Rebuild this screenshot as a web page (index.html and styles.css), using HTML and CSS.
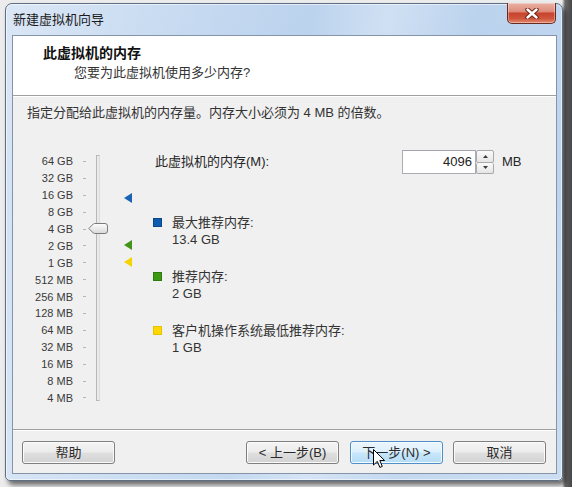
FILE: index.html
```html
<!DOCTYPE html>
<html lang="zh-CN">
<head>
<meta charset="utf-8">
<title>新建虚拟机向导</title>
<link rel="stylesheet" href="styles.css">
</head>
<body>
<div class="screen">
  <div class="window">
    <div class="titlebar">
      <span class="title">新建虚拟机向导</span>
      <button class="close" aria-label="关闭">
        <svg width="14" height="11" viewBox="0 0 14 11">
          <path d="M2.5 1.5 L11.5 9.5 M11.5 1.5 L2.5 9.5" stroke="#6b2417" stroke-width="4.4" stroke-linecap="round"/>
          <path d="M2.5 1.5 L11.5 9.5 M11.5 1.5 L2.5 9.5" stroke="#ffffff" stroke-width="2.4" stroke-linecap="round"/>
        </svg>
      </button>
    </div>

    <div class="client">
      <div class="head">
        <div class="head-title">此虚拟机的内存</div>
        <div class="head-sub">您要为此虚拟机使用多少内存?</div>
      </div>

      <div class="page">
        <p class="hint">指定分配给此虚拟机的内存量。内存大小必须为 4 MB 的倍数。</p>

        <div class="memory">
          <div class="scale">
            <div class="marks">
              <div class="mark"><span>64 GB</span></div>
              <div class="mark"><span>32 GB</span></div>
              <div class="mark"><span>16 GB</span></div>
              <div class="mark"><span>8 GB</span></div>
              <div class="mark"><span>4 GB</span></div>
              <div class="mark"><span>2 GB</span></div>
              <div class="mark"><span>1 GB</span></div>
              <div class="mark"><span>512 MB</span></div>
              <div class="mark"><span>256 MB</span></div>
              <div class="mark"><span>128 MB</span></div>
              <div class="mark"><span>64 MB</span></div>
              <div class="mark"><span>32 MB</span></div>
              <div class="mark"><span>16 MB</span></div>
              <div class="mark"><span>8 MB</span></div>
              <div class="mark"><span>4 MB</span></div>
            </div>

            <div class="slider">
              <div class="track"></div>
              <svg class="thumb" style="top:70px" width="20" height="11" viewBox="0 0 20 11">
                <defs>
                  <linearGradient id="thumbFill" x1="0" y1="0" x2="0" y2="1">
                    <stop offset="0" stop-color="#fdfdfd"/>
                    <stop offset="1" stop-color="#d9d9d9"/>
                  </linearGradient>
                </defs>
                <path d="M0.8 5.5 L5.3 1 Q5.8 0.5 6.6 0.5 H17 Q19.5 0.5 19.5 3 V8 Q19.5 10.5 17 10.5 H6.6 Q5.8 10.5 5.3 10 Z" fill="url(#thumbFill)" stroke="#7b7b7b"/>
              </svg>
            </div>

            <div class="markers">
              <svg class="pin" style="top:40px" width="8" height="10" viewBox="0 0 8 10"><polygon points="8,0 8,10 0,5" fill="#1b63b4"/></svg>
              <svg class="pin" style="top:87px" width="8" height="10" viewBox="0 0 8 10"><polygon points="8,0 8,10 0,5" fill="#45941a"/></svg>
              <svg class="pin" style="top:104px" width="8" height="10" viewBox="0 0 8 10"><polygon points="8,0 8,10 0,5" fill="#f4d300"/></svg>
            </div>
          </div>

          <div class="settings">
            <div class="amount">
              <label class="amount-label">此虚拟机的内存(M):</label>
              <div class="spin">
                <div class="spin-field">4096</div>
                <div class="spin-btns">
                  <span class="spin-btn"><svg width="5" height="3" viewBox="0 0 5 3"><polygon points="0,3 5,3 2.5,0" fill="#3a3a3a"/></svg></span>
                  <span class="spin-btn"><svg width="5" height="3" viewBox="0 0 5 3"><polygon points="0,0 5,0 2.5,3" fill="#3a3a3a"/></svg></span>
                </div>
              </div>
              <span class="unit">MB</span>
            </div>

            <ul class="legend">
              <li><i class="sw sw-max"></i><div>最大推荐内存:<br>13.4 GB</div></li>
              <li><i class="sw sw-rec"></i><div>推荐内存:<br>2 GB</div></li>
              <li><i class="sw sw-min"></i><div>客户机操作系统最低推荐内存:<br>1 GB</div></li>
            </ul>
          </div>
        </div>
      </div>

      <div class="foot">
        <button class="btn">帮助</button>
        <div class="nav">
          <button class="btn">&lt; 上一步(B)</button>
          <button class="btn btn-hot">下一步(N) &gt;</button>
          <button class="btn">取消</button>
        </div>
      </div>
    </div>
  </div>

  <svg class="cursor" width="13" height="20" viewBox="0 0 13 20">
    <path d="M0.5 0.5 V16 L4.3 12.4 L6.9 18.4 L9.3 17.4 L6.8 11.5 H11.6 Z" fill="#ffffff" stroke="#000000" stroke-width="1" stroke-linejoin="round"/>
  </svg>
</div>
</body>
</html>
```

FILE: styles.css
```css
* {
  box-sizing: border-box;
}

html, body {
  margin: 0;
  width: 572px;
  height: 487px;
  overflow: hidden;
}

body {
  background: linear-gradient(90deg, #ececec 0, #ececec 562px, #6b6b6b 565px, #464646 572px);
  font-family: "Liberation Sans", "Noto Sans CJK SC", sans-serif;
  font-size: 13px;
  color: #262626;
}

.screen {
  position: relative;
  padding: 3px 0 0 5px;
}

/* Aero window frame */
.window {
  width: 558px;
  height: 478px;
  border: 1px solid #5e6e84;
  border-radius: 7px 7px 5px 5px;
  background:
    linear-gradient(100deg, rgba(255,255,255,0.45) 0%, rgba(255,255,255,0.15) 30%, rgba(255,255,255,0) 48%, rgba(255,255,255,0.3) 60%, rgba(255,255,255,0) 74%, rgba(255,255,255,0.12) 100%),
    linear-gradient(180deg, #bcd3ee 0%, #b8d0ec 40%, #c4d9f0 100%);
  box-shadow: inset 0 0 0 1px rgba(255,255,255,0.55), 3px 4px 5px rgba(0,0,0,0.55);
  display: flex;
  flex-direction: column;
}

.titlebar {
  height: 31px;
  flex: none;
  display: flex;
  justify-content: space-between;
  align-items: flex-start;
  padding-left: 7px;
}

.title {
  padding-top: 8px;
  line-height: 16px;
  font-size: 13px;
  color: #1b1b1b;
}

.close {
  width: 49px;
  height: 21px;
  margin: -1px 6px 0 0;
  padding: 0;
  border: 1px solid #6a2a20;
  border-top: none;
  border-radius: 0 0 5px 5px;
  background: linear-gradient(180deg, #eab1a4 0%, #de8d7c 42%, #c9442e 52%, #cf553c 78%, #e38a72 100%);
  box-shadow: inset 0 0 0 1px rgba(255,255,255,0.35);
  display: flex;
  align-items: center;
  justify-content: center;
}

.client {
  flex: 1;
  margin: 0 5px 6px 6px;
  border: 1px solid #8594a8;
  background: #f0f0f0;
  display: flex;
  flex-direction: column;
}

/* wizard header */
.head {
  height: 60px;
  flex: none;
  background: #ffffff;
  border-bottom: 1px solid #a0a0a0;
  padding: 9px 0 0 30px;
}

.head-title {
  font-size: 14px;
  font-weight: bold;
  line-height: 16px;
  color: #111;
}

.head-sub {
  margin: 4px 0 0 31px;
  line-height: 16px;
  color: #333;
}

.page {
  flex: 1;
  border-top: 1px solid #ffffff;
  padding-top: 8px;
}

.hint {
  margin: 0;
  padding-left: 14px;
  line-height: 16px;
  color: #333;
}

.memory {
  display: flex;
  align-items: flex-start;
  margin-top: 29px;
}

/* logarithmic memory scale */
.scale {
  display: flex;
  padding-top: 3px;
}

.marks {
  width: 73px;
}

.mark {
  height: 16.9px;
  display: flex;
  align-items: center;
  justify-content: flex-end;
  gap: 10px;
  font-size: 11px;
  color: #3a3a3a;
}

.mark::after {
  content: "";
  width: 3px;
  height: 1px;
  background: #b6b6b6;
}

.slider {
  position: relative;
  width: 20px;
  height: 253.5px;
  margin-left: 2px;
}

.track {
  width: 4px;
  height: 246px;
  margin: 2px auto 0;
  border: 1px solid #b8b8b8;
  border-right-color: #dcdcdc;
  background: #e9e9e9;
}

.thumb {
  position: absolute;
  left: 0;
  display: block;
}

.markers {
  position: relative;
  width: 8px;
  height: 253.5px;
  margin-left: 16px;
}

.pin {
  position: absolute;
  left: 0;
  display: block;
}

.settings {
  margin-left: 21px;
}

.amount {
  display: flex;
  align-items: center;
  height: 24px;
}

.amount-label {
  width: 249px;
  padding-left: 2px;
  line-height: 16px;
}

.spin {
  display: flex;
}

.spin-field {
  width: 74px;
  height: 24px;
  border: 1px solid #abadb3;
  border-top-color: #a3a6ad;
  background: #ffffff;
  text-align: right;
  padding-right: 3px;
  line-height: 22px;
  font-size: 13px;
  color: #222;
}

.spin-btns {
  width: 18px;
  height: 24px;
  display: flex;
  flex-direction: column;
}

.spin-btn {
  flex: 1;
  display: flex;
  align-items: center;
  justify-content: center;
  border: 1px solid #a9a9a9;
  border-radius: 2px;
  background: linear-gradient(180deg, #fafafa 0%, #e6e6e6 100%);
}

.spin-btn + .spin-btn {
  border-top: none;
}

.unit {
  margin-left: 8px;
  line-height: 16px;
}

.legend {
  list-style: none;
  margin: 40px 0 0;
  padding: 0;
  display: flex;
  flex-direction: column;
  gap: 20px;
}

.legend li {
  display: flex;
  gap: 10px;
  line-height: 17px;
  color: #333;
}

.sw {
  width: 9px;
  height: 9px;
  margin-top: 4px;
  flex: none;
}

.sw-max { background: #0f5bb0; border: 1px solid #0b4587; }
.sw-rec { background: #3d9912; border: 1px solid #2f7a0c; }
.sw-min { background: #ffd800; border: 1px solid #e7c200; }

/* button row */
.foot {
  height: 44px;
  flex: none;
  border-top: 1px solid #a0a0a0;
  box-shadow: inset 0 1px #ffffff;
  padding: 11px 10px 0 9px;
  display: flex;
  justify-content: space-between;
  align-items: flex-start;
}

.nav {
  display: flex;
  gap: 10px;
}

.nav .btn:first-child {
  margin-right: 1px;
}

.btn {
  width: 93px;
  height: 23px;
  padding: 0;
  border: 1px solid #7f7f7f;
  border-radius: 3px;
  background: linear-gradient(180deg, #f4f4f4 0%, #ececec 48%, #dfdfdf 52%, #d2d2d2 100%);
  box-shadow: inset 0 0 0 1px #fbfbfb;
  font-family: "Liberation Sans", "Noto Sans CJK SC", sans-serif;
  font-size: 13px;
  line-height: 20px;
  color: #2a2a2a;
}

.btn-hot {
  border-color: #4f8fc6;
  background: linear-gradient(180deg, #ecf6fd 0%, #ddf0fc 48%, #c7e7fb 52%, #b5dcf5 100%);
  box-shadow: inset 0 0 0 1px #f4fbff;
}

.cursor {
  position: absolute;
  left: 373px;
  top: 449px;
  display: block;
}
```
